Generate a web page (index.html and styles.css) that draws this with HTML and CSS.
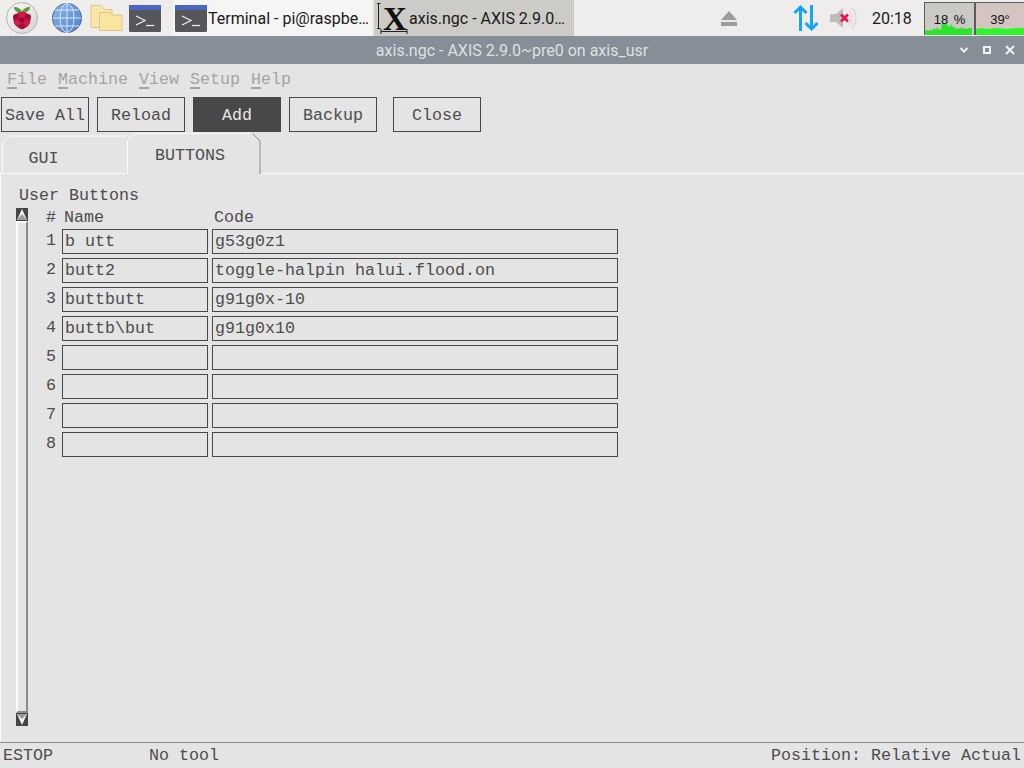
FILE: index.html
```html
<!DOCTYPE html>
<html lang="en">
<head>
<meta charset="utf-8">
<title>axis.ngc - AXIS 2.9.0~pre0 on axis_usr</title>
<link rel="stylesheet" href="styles.css">
</head>
<body>
<div class="screen">
  <header class="taskbar">
    <div class="launchers">
      <svg class="launch launch-pi" width="40" height="36" viewBox="0 0 40 36">
        <defs><linearGradient id="piBg" x1="0" y1="0" x2="1" y2="1"><stop offset="0" stop-color="#fbfbfb"/><stop offset="1" stop-color="#d2d2d2"/></linearGradient></defs>
        <circle cx="22" cy="18" r="15.5" fill="url(#piBg)" stroke="#b5b5b5"/>
        <path d="M22 12c-1-3-4-5-8-5 0 4 3 6 8 5zM22 12c1-3 4-5 8-5 0 4-3 6-8 5z" fill="#5e9e3a"/>
        <circle cx="22" cy="20" r="8.6" fill="#c11240"/>
        <circle cx="16" cy="17" r="3" fill="#a30e36"/><circle cx="22" cy="15" r="3" fill="#d31a4b"/><circle cx="28" cy="17" r="3" fill="#a30e36"/>
        <circle cx="17.5" cy="22.5" r="3" fill="#d31a4b"/><circle cx="26.5" cy="22.5" r="3" fill="#d31a4b"/><circle cx="22" cy="20" r="2.6" fill="#8e0c2e"/><circle cx="22" cy="26.5" r="2.8" fill="#a30e36"/>
      </svg>
      <svg class="launch launch-globe" width="32" height="36" viewBox="0 0 32 36">
        <defs><linearGradient id="globe" x1="0" y1="0" x2="1" y2="1"><stop offset="0" stop-color="#8fb8ec"/><stop offset="1" stop-color="#4f82c6"/></linearGradient></defs>
        <circle cx="16" cy="18" r="14.6" fill="url(#globe)" stroke="#47678f"/>
        <path d="M1.5 18h29M4 10h24M4 26h24M16 3.500v29" stroke="#d8e6f8" fill="none"/>
        <ellipse cx="16" cy="18" rx="7" ry="14.500" stroke="#d8e6f8" fill="none"/>
      </svg>
      <svg class="launch launch-folder" width="33" height="36" viewBox="0 0 33 36">
        <path d="M1 5.500h10l3 4h8v18h-21z" fill="#f7e6a6" stroke="#dcc689"/>
        <path d="M9.500 12.500h10l3 2.500h9.500v15.500h-22.500z" fill="#f9e5a0" stroke="#dcc689"/>
      </svg>
      <svg class="launch launch-term" width="32" height="36" viewBox="0 0 32 36">
        <rect x="0" y="5" width="32" height="27" rx="1.500" fill="#55575a"/>
        <rect x="0" y="5" width="32" height="5" fill="#4a66c4"/>
        <path d="M7 16l9 4.500-9 4.500" stroke="#f2f2f2" fill="none" stroke-width="1.200"/>
        <path d="M17 25.500h8" stroke="#f2f2f2" stroke-width="1.200"/>
      </svg>
    </div>
    <div class="task task-light">
      <svg class="task-icon" width="32" height="36" viewBox="0 0 32 36">
        <rect x="0" y="5" width="32" height="27" rx="1.500" fill="#55575a"/>
        <rect x="0" y="5" width="32" height="5" fill="#4a66c4"/>
        <path d="M7 16l9 4.500-9 4.500" stroke="#f2f2f2" fill="none" stroke-width="1.200"/>
        <path d="M17 25.500h8" stroke="#f2f2f2" stroke-width="1.200"/>
      </svg>
      <span class="task-label">Terminal - pi@raspbe…</span>
    </div>
    <div class="task task-active">
      <svg class="task-icon" width="32" height="36" viewBox="0 0 32 36">
        <text x="18" y="29.500" text-anchor="middle" class="x-glyph">X</text>
        <path d="M1.500 4v24M0 3.500h3.500M0 28.500h3.500M4 31.500h26M4 29v5M30 29v5" stroke="#222" fill="none"/>
      </svg>
      <span class="task-label">axis.ngc - AXIS 2.9.0…</span>
    </div>
    <div class="tray">
      <svg class="tray-eject" width="18" height="18" viewBox="0 0 18 18"><path d="M9 2l8 9h-16z" fill="#9c9c9c"/><rect x="1" y="13" width="16" height="4" fill="#9c9c9c"/></svg>
      <svg class="tray-net" width="26" height="28" viewBox="0 0 26 28" fill="none" stroke="#14a5fa" stroke-width="3"><path d="M7.500 27v-24M1.500 9l6-6 6 6M18.500 1v24M12.500 19l6 6 6-6"/></svg>
      <svg class="tray-vol" width="27" height="24" viewBox="0 0 27 24"><path d="M0 8h6l7-6v20l-7-6h-6z" fill="#bcbcbc"/><path d="M19 5c3 4 3 10 0 14M22 2c5 6 5 14 0 20" stroke="#dedddb" stroke-width="2" fill="none"/><path d="M11 8.500l7 7M18 8.500l-7 7" stroke="#f0104f" stroke-width="2.600"/></svg>
      <span class="clock">20:18</span>
      <div class="gauges">
        <div class="gauge gauge-cpu">
          <svg class="gauge-plot" width="49" height="32" viewBox="0 0 49 32" preserveAspectRatio="none"><path d="M0 32v-4l2-1 2 1 2-2 1 2 2-3 2 2 1-3 2 3 2-1 1-6 3 0 1-1 2 4 2 1 1-4 1 4 2-1 1 3 3-1 1 1 2-2 1 2 2-1 2 1 4-1 2 0v7z" fill="#2be52b"/></svg>
          <span class="gauge-text">18 %</span>
        </div>
        <div class="gauge gauge-temp">
          <svg class="gauge-plot" width="49" height="32" viewBox="0 0 49 32" preserveAspectRatio="none"><path d="M0 32v-6l5-1 8 1 8-1 10 1 8-1 10 0v7z" fill="#2bf52b"/></svg>
          <span class="gauge-text">39°</span>
        </div>
      </div>
    </div>
  </header>

  <div class="titlebar">
    <span class="title">axis.ngc - AXIS 2.9.0~pre0 on axis_usr</span>
    <div class="win-controls">
      <svg width="10" height="10" viewBox="0 0 10 10"><path d="M1.500 3l3.500 3.500 3.500-3.500" stroke="#f2f2f2" stroke-width="2" fill="none"/></svg>
      <svg width="10" height="10" viewBox="0 0 10 10"><rect x="2" y="2" width="6" height="6" stroke="#f2f2f2" stroke-width="2" fill="none"/></svg>
      <svg width="10" height="10" viewBox="0 0 10 10"><path d="M1 1l8 8M9 1l-8 8" stroke="#f2f2f2" stroke-width="2" fill="none"/></svg>
    </div>
  </div>

  <main class="app">
    <nav class="menu">
      <span class="menu-item"><u>F</u>ile</span>
      <span class="menu-item"><u>M</u>achine</span>
      <span class="menu-item"><u>V</u>iew</span>
      <span class="menu-item"><u>S</u>etup</span>
      <span class="menu-item"><u>H</u>elp</span>
    </nav>
    <div class="toolbar">
      <div class="btn">Save All</div>
      <div class="btn">Reload</div>
      <div class="btn btn-active">Add</div>
      <div class="btn">Backup</div>
      <div class="btn btn-gap">Close</div>
    </div>
    <div class="tabs">
      <div class="tab tab-gui">
        <svg class="tab-edge" width="125" height="39" viewBox="0 0 125 39" fill="none"><path d="M.5 39v-31l7-7h117" stroke="#fbfbfb"/></svg>
        <span class="tab-label">GUI</span>
      </div>
      <div class="tab tab-buttons">
        <svg class="tab-edge" width="134" height="41" viewBox="0 0 134 41" fill="none"><path d="M.5 41v-34l7-6.500h118" stroke="#fbfbfb"/><path d="M125.500 .5l7.500 7.500v33" stroke="#8d8d8d"/></svg>
        <span class="tab-label">BUTTONS</span>
      </div>
    </div>
    <section class="panel">
      <div class="panel-title">User Buttons</div>
      <div class="panel-body">
        <div class="scrollbar">
          <svg class="arrow" width="12" height="13" viewBox="0 0 12 13"><rect width="12" height="13" fill="#454545"/><path d="M6 1l5 11h-10z" fill="#f4f4f4"/><path d="M6 6l5 6h-10z" fill="#9a9a9a"/></svg>
          <div class="slider"></div>
          <svg class="arrow" width="12" height="13" viewBox="0 0 12 13"><rect width="12" height="13" fill="#454545"/><path d="M1 1h10l-5 11z" fill="#f4f4f4"/><path d="M1 1h10l-5 5z" fill="#9a9a9a"/></svg>
        </div>
        <div class="grid">
          <div class="head">#</div><div class="head head-name">Name</div><div class="head head-code">Code</div>
          <div class="num">1</div><div class="field">b utt</div><div class="field field-code">g53g0z1</div>
          <div class="num">2</div><div class="field">butt2</div><div class="field field-code">toggle-halpin halui.flood.on</div>
          <div class="num">3</div><div class="field">buttbutt</div><div class="field field-code">g91g0x-10</div>
          <div class="num">4</div><div class="field">buttb\but</div><div class="field field-code">g91g0x10</div>
          <div class="num">5</div><div class="field"></div><div class="field field-code"></div>
          <div class="num">6</div><div class="field"></div><div class="field field-code"></div>
          <div class="num">7</div><div class="field"></div><div class="field field-code"></div>
          <div class="num">8</div><div class="field"></div><div class="field field-code"></div>
        </div>
      </div>
    </section>
    <footer class="status">
      <span class="status-estop">ESTOP</span>
      <span class="status-tool">No tool</span>
      <span class="status-pos">Position: Relative Actual</span>
    </footer>
  </main>
</div>
</body>
</html>
```

FILE: styles.css
```css
* { box-sizing: border-box; }
html, body { margin: 0; padding: 0; }
body { width: 1024px; height: 768px; overflow: hidden; background: #e4e4e4; }
.screen { width: 1024px; height: 768px; display: flex; flex-direction: column; }

.taskbar { height: 36px; flex: none; display: flex; background: #eeedeb; font-family: Roboto, sans-serif; font-size: 16px; color: #1a1a1a; }
.launchers { display: flex; width: 173px; flex: none; }
.launch { display: block; flex: none; }
.launch-globe { margin-left: 11px; }
.launch-folder { margin-left: 7px; }
.launch-term { margin-left: 6px; }
.task { width: 200px; flex: none; display: flex; align-items: center; padding-left: 2px; overflow: hidden; }
.task-light { width: 199px; background: #f5f5f5; margin-right: 2px; }
.task-active { background: #cccbc7; padding-left: 3px; }
.task-icon { flex: none; display: block; }
.task-label { white-space: nowrap; margin-left: 1px; }
.task-active .task-label { margin-left: 0; }
.x-glyph { font-family: "Liberation Serif", serif; font-weight: 700; font-size: 33px; fill: #111; }

.tray { flex: 1; display: flex; align-items: center; position: relative; }
.tray-eject { margin-left: 146px; flex: none; }
.tray-net { margin-left: 55px; flex: none; }
.tray-vol { margin-left: 11px; flex: none; }
.clock { margin-left: 15px; width: 40px; flex: none; }
.gauges { margin-left: 12px; display: flex; height: 33px; margin-top: 1px; }
.gauge { position: relative; width: 50px; height: 33px; border-top: 1px solid #5c5c5c; border-left: 1px solid #5c5c5c; display: flex; align-items: center; justify-content: center; font-family: "Liberation Sans", sans-serif; font-size: 13px; color: #111; }
.gauge-cpu { background: #cbc9c6; }
.gauge-temp { background: #d4c5c3; border-left: 2px solid #5c5c5c; }
.gauge-plot { position: absolute; left: 0; bottom: 0; }
.gauge-text { position: relative; word-spacing: 2px; }

.titlebar { height: 28px; flex: none; background: #868f97; display: flex; align-items: center; justify-content: center; position: relative; font-family: Roboto, sans-serif; font-size: 16px; color: #dde1e4; }
.win-controls { position: absolute; right: 9px; top: 9px; display: flex; gap: 13px; }
.win-controls svg { display: block; }

.app { flex: 1; min-height: 0; display: flex; flex-direction: column; font-family: "Liberation Mono", monospace; font-size: 16.670px; color: #4d4d4d; background: #e4e4e4; }
.menu { height: 33px; flex: none; display: flex; gap: 11px; align-items: center; padding-left: 7px; color: #a4a4a4; padding-bottom: 3px; }
.menu-item { white-space: pre; }
.menu-item u { text-decoration-thickness: 2px; text-underline-offset: 3px; }

.toolbar { height: 35px; flex: none; display: flex; gap: 8px; padding-left: 1px; }
.btn { width: 88px; height: 35px; border: 1px solid #484848; padding-top: 1px; display: flex; align-items: center; justify-content: center; white-space: pre; }
.btn-active { background: #484848; color: #e6e6e6; }
.btn-gap { margin-left: 8px; }

.tabs { height: 42px; flex: none; display: flex; align-items: flex-end; padding-left: 2px; }
.tab { position: relative; display: flex; justify-content: center; }
.tab-edge { position: absolute; left: 0; bottom: 0; display: block; }
.tab-gui { width: 125px; height: 39px; padding-top: 13px; padding-right: 42px; }
.tab-buttons { width: 134px; height: 41px; padding-top: 12px; padding-right: 8px; }
.tab-label { line-height: 22px; }

.panel { flex: 1; min-height: 0; display: flex; flex-direction: column; border-left: 1px solid #fbfbfb; padding-left: 15px; position: relative; }
.panel::before { content: ""; position: absolute; left: -1px; top: -1px; width: 126px; height: 1px; background: #fbfbfb; }
.panel::after { content: ""; position: absolute; left: 260px; right: 0; top: -1px; height: 1px; background: #fbfbfb; }
.panel-title { height: 34px; flex: none; padding: 12px 0 0 3px; line-height: 20px; white-space: pre; }
.panel-body { flex: 1; min-height: 0; display: flex; padding-bottom: 16px; }

.scrollbar { width: 12px; flex: none; display: flex; flex-direction: column; }
.arrow { display: block; flex: none; }
.slider { flex: 1; border-left: 2px solid #fbfbfb; border-right: 2px solid #8a8a8a; border-bottom: 2px solid #8a8a8a; border-top: 2px solid #fbfbfb; }

.grid { margin-left: 18px; display: grid; grid-template-columns: 16px 146px 410px; grid-auto-rows: 25px; grid-template-rows: 17px; row-gap: 4px; align-content: start; align-items: center; }
.head { height: 17px; line-height: 19px; white-space: pre; }
.head-name { padding-left: 2px; }
.head-code { padding-left: 6px; }
.num { line-height: 20px; padding-bottom: 1px; }
.field { height: 25px; border: 1px solid #484848; padding-left: 2px; line-height: 23px; white-space: pre; }
.field-code { margin-left: 4px; }

.status { height: 26px; flex: none; border-top: 1px solid #8c8c8c; display: flex; align-items: center; padding: 0 3px 1px; white-space: pre; }
.status-estop { width: 146px; flex: none; }
.status-pos { margin-left: auto; }
```
